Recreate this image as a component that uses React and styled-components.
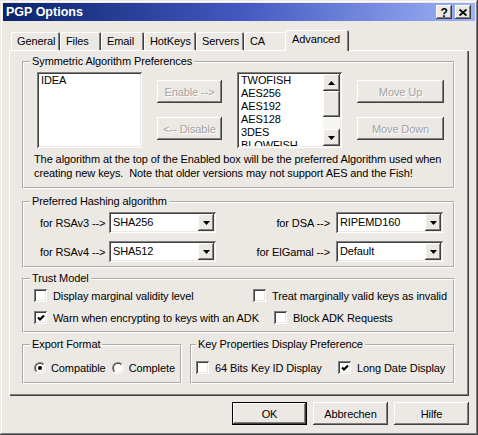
import React from 'react';
import styled, { createGlobalStyle, css } from 'styled-components';

const face = '#ece9e4';
const hi = '#ffffff';
const shadow = '#808080';
const dark = '#404040';
const uiFont = `"Liberation Sans", Arial, sans-serif`;

const GlobalStyle = createGlobalStyle`
  html, body {
    margin: 0;
    padding: 0;
    background: ${face};
  }
  body {
    font-family: ${uiFont};
    font-size: 11px;
    letter-spacing: -0.1px;
    color: #000;
    overflow: hidden;
  }
  * { box-sizing: border-box; }
`;

const raised = css`
  box-shadow: inset -1px -1px 0 ${dark}, inset 1px 1px 0 ${hi},
    inset -2px -2px 0 ${shadow}, inset 2px 2px 0 ${face};
`;

const sunken = css`
  box-shadow: inset 1px 1px 0 ${shadow}, inset -1px -1px 0 ${hi},
    inset 2px 2px 0 ${dark}, inset -2px -2px 0 ${face};
`;

const Window = styled.div`
  width: 478px;
  height: 435px;
  padding: 3px;
  background: ${face};
  display: flex;
  flex-direction: column;
  box-shadow: inset -1px -1px 0 ${dark}, inset 1px 1px 0 ${face},
    inset -2px -2px 0 ${shadow}, inset 2px 2px 0 ${hi};
`;

const TitleBar = styled.div`
  height: 18px;
  display: flex;
  align-items: center;
  padding: 0 4px 0 3px;
  background: linear-gradient(to right, #0a246a 0%, #4258c0 50%, #9eb2f6 100%);
`;

const Title = styled.div`
  flex: 1;
  color: #fff;
  font-family: "Liberation Sans", Arial, sans-serif;
  font-weight: bold;
  font-size: 12.5px;
  letter-spacing: 0;
`;

const TitleButton = styled.div`
  width: 16px;
  height: 14px;
  margin-left: ${p => p.$ml || 0}px;
  background: ${face};
  display: flex;
  align-items: center;
  justify-content: center;
  font-family: "Liberation Sans", Arial, sans-serif;
  font-weight: bold;
  font-size: 12px;
  line-height: 12px;
  padding-top: 1px;
  ${raised}
`;

const TabStrip = styled.div`
  display: flex;
  align-items: flex-end;
  height: 20px;
  margin-top: 9px;
  padding-left: 8px;
`;

const Tab = styled.div`
  width: ${p => p.$w}px;
  height: 18px;
  padding-left: 6px;
  line-height: 19px;
  white-space: nowrap;
  border-radius: 2px 2px 0 0;
  box-shadow: inset 1px 1px 0 ${hi}, inset -1px 0 0 ${dark}, inset -2px 0 0 ${shadow};
  ${p => p.$active && css`
    position: relative;
    z-index: 1;
    width: ${p.$w + 4}px;
    height: 21px;
    margin: 0 -2px -1px;
    padding-left: 7px;
    line-height: 19px;
    background: ${face};
  `}
`;

const Panel = styled.div`
  margin: 0 6px;
  height: 346px;
  padding: 5px 14px 0 13px;
  display: flex;
  flex-direction: column;
  box-shadow: inset 1px 1px 0 ${hi}, inset -1px -1px 0 ${dark}, inset -2px -2px 0 ${shadow};
`;

const Group = styled.fieldset`
  margin: ${p => p.$mt || 0}px 0 0;
  padding: ${p => p.$pad};
  border: 2px groove #fff;
  min-width: 0;
  flex: none;
  ${p => p.$w && css`width: ${p.$w}px;`}
  ${p => p.$grow && css`flex: 1;`}
`;

const Legend = styled.legend`
  padding: 0 2px;
  line-height: 13px;
  height: 13px;
`;

const AlgoRow = styled.div`
  display: flex;
  gap: 15px;
  margin: 4px 0 0 7px;
`;

const ListBox = styled.div`
  width: 105px;
  height: 76px;
  padding: 2px;
  background: #fff;
  display: flex;
  overflow: hidden;
  ${sunken}
`;

const ListItems = styled.div`
  flex: 1;
  overflow: hidden;
`;

const ListItem = styled.div`
  line-height: 13px;
  height: 13px;
  padding-left: 2px;
  white-space: nowrap;
`;

const ScrollBar = styled.div`
  width: 17px;
  display: flex;
  flex-direction: column;
`;

const ScrollButton = styled.div`
  height: 17px;
  background: ${face};
  display: flex;
  align-items: center;
  justify-content: center;
  ${raised}
`;

const Thumb = styled.div`
  height: 26px;
  background: ${face};
  ${raised}
`;

const Track = styled.div`
  flex: 1;
  background: #f6f5f2;
`;

const ButtonCol = styled.div`
  display: flex;
  flex-direction: column;
  gap: 14px;
  padding-top: 8px;
`;

const Button = styled.button`
  width: ${p => p.$w}px;
  height: 23px;
  border: 0;
  padding: 0;
  background: ${face};
  font: inherit;
  letter-spacing: inherit;
  color: #000;
  ${raised}
  &:disabled {
    color: #a3a3a3;
    text-shadow: 1px 1px 0 #fff;
  }
  ${p => p.$default && css`
    box-shadow: inset 0 0 0 1px #000, inset -2px -2px 0 ${dark}, inset 2px 2px 0 ${hi},
      inset -3px -3px 0 ${shadow};
  `}
`;

const Note = styled.div`
  margin: 4px 0 0 4px;
  line-height: 14px;
  white-space: pre;
`;

const HashRow = styled.div`
  display: flex;
  align-items: center;
  height: 21px;
  margin-top: ${p => p.$mt}px;
  padding: 0 10px 0 10px;
`;

const HashLabel = styled.div`
  white-space: nowrap;
  ${p => p.$w ? css`width: ${p.$w}px;` : css`margin-left: auto; margin-right: 6px;`}
`;

const ComboBox = styled.div`
  width: 107px;
  height: 21px;
  padding: 2px;
  background: #fff;
  display: flex;
  ${sunken}
`;

const ComboValue = styled.div`
  flex: 1;
  padding-left: 2px;
  line-height: 17px;
  white-space: nowrap;
`;

const DropButton = styled.div`
  width: 16px;
  height: 17px;
  background: ${face};
  display: flex;
  align-items: center;
  justify-content: center;
  ${raised}
`;

const CheckRow = styled.div`
  display: flex;
  align-items: center;
  height: 13px;
  margin: ${p => p.$mt}px 0 0 ${p => p.$ml}px;
`;

const Cell = styled.label`
  display: flex;
  align-items: center;
  gap: ${p => p.$gap || 6}px;
  white-space: nowrap;
  margin-left: ${p => p.$ml || 0}px;
  ${p => p.$w && css`width: ${p.$w}px; flex: none;`}
`;

const CheckBox = styled.span`
  width: 13px;
  height: 13px;
  flex: none;
  background: #fff;
  display: flex;
  align-items: center;
  justify-content: center;
  ${sunken}
`;

const RadioOuter = styled.span`
  width: 12px;
  height: 12px;
  flex: none;
  border-radius: 50%;
  border: 1px solid;
  border-color: ${shadow} ${hi} ${hi} ${shadow};
`;

const RadioInner = styled.span`
  display: flex;
  align-items: center;
  justify-content: center;
  width: 10px;
  height: 10px;
  border-radius: 50%;
  border: 1px solid;
  border-color: ${dark} ${face} ${face} ${dark};
  background: #fff;
  &::after {
    content: '';
    display: ${p => (p.$on ? 'block' : 'none')};
    width: 4px;
    height: 4px;
    border-radius: 50%;
    background: #000;
  }
`;

const BottomRow = styled.div`
  display: flex;
  gap: 8px;
  margin-top: 5px;
`;

const Footer = styled.div`
  display: flex;
  justify-content: flex-end;
  gap: 6px;
  margin: 6px 6px 0 0;
`;

const Arrow = ({ up }) => (
  <svg width="7" height="4" viewBox="0 0 7 4">
    <path d={up ? 'M3.5 0L7 4H0z' : 'M0 0h7L3.5 4z'} fill="#000" />
  </svg>
);

const Check = ({ checked }) => (
  <CheckBox>
    {checked && (
      <svg width="8" height="8" viewBox="0 0 8 8">
        <path d="M1 3.5l2 2L7 1.5" stroke="#000" strokeWidth="2.2" fill="none" />
      </svg>
    )}
  </CheckBox>
);

const Radio = ({ on }) => (
  <RadioOuter>
    <RadioInner $on={on} />
  </RadioOuter>
);

const Combo = ({ value }) => (
  <ComboBox>
    <ComboValue>{value}</ComboValue>
    <DropButton><Arrow /></DropButton>
  </ComboBox>
);

const tabs = [
  { label: 'General', w: 49 },
  { label: 'Files', w: 41 },
  { label: 'Email', w: 43 },
  { label: 'HotKeys', w: 52 },
  { label: 'Servers', w: 48 },
  { label: 'CA', w: 43 },
  { label: 'Advanced', w: 60, active: true },
];

const enabled = ['TWOFISH', 'AES256', 'AES192', 'AES128', '3DES', 'BLOWFISH'];

export default function App() {
  return (
    <>
      <GlobalStyle />
      <Window>
        <TitleBar>
          <Title>PGP Options</Title>
          <TitleButton>?</TitleButton>
          <TitleButton $ml={3}>
            <svg width="8" height="7" viewBox="0 0 8 7">
              <path d="M0.5 0.5L7.5 6.5M7.5 0.5L0.5 6.5" stroke="#000" strokeWidth="1.8" />
            </svg>
          </TitleButton>
        </TitleBar>

        <TabStrip>
          {tabs.map(t => (
            <Tab key={t.label} $w={t.w} $active={t.active}>{t.label}</Tab>
          ))}
        </TabStrip>

        <Panel>
          <Group $pad="0 0 7px 6px">
            <Legend>Symmetric Algorithm Preferences</Legend>
            <AlgoRow>
              <ListBox>
                <ListItems>
                  <ListItem>IDEA</ListItem>
                </ListItems>
              </ListBox>
              <ButtonCol>
                <Button $w={65} disabled>Enable --&gt;</Button>
                <Button $w={65} disabled>&lt;-- Disable</Button>
              </ButtonCol>
              <ListBox>
                <ListItems>
                  {enabled.map(a => <ListItem key={a}>{a}</ListItem>)}
                </ListItems>
                <ScrollBar>
                  <ScrollButton><Arrow up /></ScrollButton>
                  <Thumb />
                  <Track />
                  <ScrollButton><Arrow /></ScrollButton>
                </ScrollBar>
              </ListBox>
              <ButtonCol>
                <Button $w={87} disabled>Move Up</Button>
                <Button $w={87} disabled>Move Down</Button>
              </ButtonCol>
            </AlgoRow>
            <Note>
              {'The algorithm at the top of the Enabled box will be the preferred Algorithm used when\ncreating new keys.  Note that older versions may not support AES and the Fish!'}
            </Note>
          </Group>

          <Group $mt={6} $pad="0 0 4px 6px">
            <Legend>Preferred Hashing algorithm</Legend>
            <HashRow $mt={4}>
              <HashLabel $w={69}>for RSAv3 --&gt;</HashLabel>
              <Combo value="SHA256" />
              <HashLabel>for DSA --&gt;</HashLabel>
              <Combo value="RIPEMD160" />
            </HashRow>
            <HashRow $mt={8}>
              <HashLabel $w={69}>for RSAv4 --&gt;</HashLabel>
              <Combo value="SHA512" />
              <HashLabel>for ElGamal --&gt;</HashLabel>
              <Combo value="Default" />
            </HashRow>
          </Group>

          <Group $mt={4} $pad="0 0 7px 6px">
            <Legend>Trust Model</Legend>
            <CheckRow $mt={4} $ml={4}>
              <Cell $w={219}><Check />Display marginal validity level</Cell>
              <Cell><Check />Treat marginally valid keys as invalid</Cell>
            </CheckRow>
            <CheckRow $mt={9} $ml={4}>
              <Cell $w={240}><Check checked />Warn when encrypting to keys with an ADK</Cell>
              <Cell><Check />Block ADK Requests</Cell>
            </CheckRow>
          </Group>

          <BottomRow>
            <Group $w={160} $pad="0 0 8px 6px">
              <Legend>Export Format</Legend>
              <CheckRow $mt={10} $ml={4}>
                <Cell $gap={5}><Radio on />Compatible</Cell>
                <Cell $gap={5} $ml={6}><Radio />Complete</Cell>
              </CheckRow>
            </Group>
            <Group $grow $pad="0 0 8px 4px">
              <Legend>Key Properties Display Preference</Legend>
              <CheckRow $mt={10} $ml={0}>
                <Cell $w={142}><Check />64 Bits Key ID Display</Cell>
                <Cell><Check checked />Long Date Display</Cell>
              </CheckRow>
            </Group>
          </BottomRow>
        </Panel>

        <Footer>
          <Button $w={75} $default>OK</Button>
          <Button $w={75}>Abbrechen</Button>
          <Button $w={75}>Hilfe</Button>
        </Footer>
      </Window>
    </>
  );
}
